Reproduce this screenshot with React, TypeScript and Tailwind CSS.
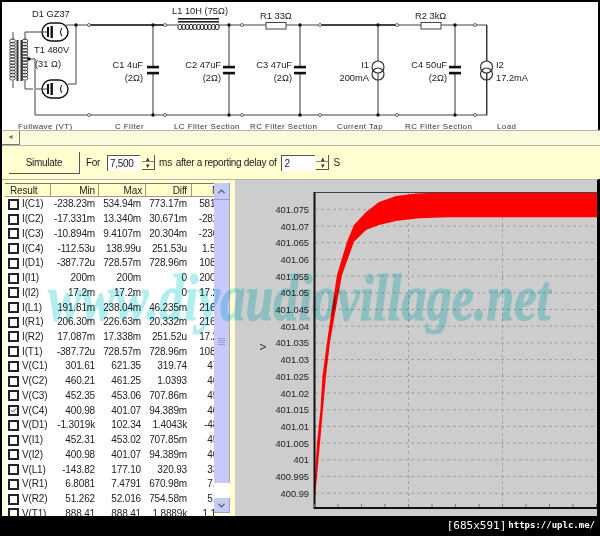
import React from 'react';
import { Check, ChevronDown, ChevronUp } from 'lucide-react';

const rows = [
  ['I(C1)', '-238.23m', '534.94m', '773.17m', '581.05m'],
  ['I(C2)', '-17.331m', '13.340m', '30.671m', '-282.05u'],
  ['I(C3)', '-10.894m', '9.4107m', '20.304m', '-230.51u'],
  ['I(C4)', '-112.53u', '138.99u', '251.53u', '1.5067u'],
  ['I(D1)', '-387.72u', '728.57m', '728.96m', '108.33m'],
  ['I(I1)', '200m', '200m', '0', '200.00m'],
  ['I(I2)', '17.2m', '17.2m', '0', '17.200m'],
  ['I(L1)', '191.81m', '238.04m', '46.235m', '216.51m'],
  ['I(R1)', '206.30m', '226.63m', '20.332m', '216.51m'],
  ['I(R2)', '17.087m', '17.338m', '251.52u', '17.200m'],
  ['I(T1)', '-387.72u', '728.57m', '728.96m', '108.33m'],
  ['V(C1)', '301.61', '621.35', '319.74', '471.05'],
  ['V(C2)', '460.21', '461.25', '1.0393', '460.73'],
  ['V(C3)', '452.35', '453.06', '707.86m', '452.70'],
  ['V(C4)', '400.98', '401.07', '94.389m', '401.05'],
  ['V(D1)', '-1.3019k', '102.34', '1.4043k', '-48.219'],
  ['V(I1)', '452.31', '453.02', '707.85m', '452.66'],
  ['V(I2)', '400.98', '401.07', '94.389m', '401.05'],
  ['V(L1)', '-143.82', '177.10', '320.93', '33.001'],
  ['V(R1)', '6.8081', '7.4791', '670.98m', '7.1445'],
  ['V(R2)', '51.262', '52.016', '754.58m', '51.639'],
  ['V(T1)', '888.41', '888.41', '1.8889k', '1.1043k'],
];

const yLabels = [
  '401.075', '401.07', '401.065', '401.06', '401.055', '401.05', '401.045', '401.04', '401.035',
  '401.03', '401.025', '401.02', '401.015', '401.01', '401.005', '401', '400.995', '400.99',
];

const wire = 'stroke-[#444] fill-none';

function Node({ x, y, open }: { x: number; y: number; open?: boolean }) {
  return open ? (
    <circle cx={x} cy={y} r="1.5" fill="#fff" stroke="#444" strokeWidth="0.8" />
  ) : (
    <circle cx={x} cy={y} r="1.7" fill="#111" />
  );
}

function Cap({ x }: { x: number }) {
  return (
    <g>
      <line x1={x} y1="25" x2={x} y2="67" stroke="#333" />
      <line x1={x} y1="73" x2={x} y2="115" stroke="#333" />
      <rect x={x - 6} y="65.8" width="12" height="2.6" fill="#111" />
      <rect x={x - 6} y="71.8" width="12" height="2.6" fill="#111" />
    </g>
  );
}

function Source({ x }: { x: number }) {
  return (
    <g>
      <line x1={x} y1="25" x2={x} y2="115" stroke="#333" />
      <circle cx={x} cy="67" r="6" fill="#fff" stroke="#333" strokeWidth="1.2" />
      <circle cx={x} cy="74" r="6" fill="none" stroke="#333" strokeWidth="1.2" />
    </g>
  );
}

function Tube({ y }: { y: number }) {
  return (
    <g>
      <rect x="42" y={y - 9} width="26" height="18" rx="9" fill="#fff" stroke="#111" strokeWidth="1.4" />
      <line x1="41" y1={y} x2="47" y2={y} stroke="#444" />
      <rect x="47" y={y - 5} width="2" height="10" fill="#111" />
      <rect x="50.5" y={y - 6} width="2.4" height="12" fill="#111" />
      <path d={`M62 ${y - 4} Q59 ${y} 62 ${y + 4}`} fill="none" stroke="#222" strokeWidth="1.1" />
    </g>
  );
}

function Coil({ x, y, n, dir }: { x: number; y: number; n: number; dir: 'h' | 'v' }) {
  const loops = [];
  for (let i = 0; i < n; i++) {
    loops.push(
      dir === 'h' ? (
        <ellipse key={i} cx={x + i * 3.7} cy={y} rx="2.2" ry="2.6" fill="none" stroke="#222" strokeWidth="1" />
      ) : (
        <ellipse key={i} cx={x} cy={y + i * 3.1} rx="2.8" ry="2" fill="none" stroke="#333" strokeWidth="0.9" />
      ),
    );
  }
  return <g>{loops}</g>;
}

function Schematic() {
  return (
    <svg viewBox="2 2 596 128" className="h-[128px] w-[596px] shrink-0 bg-white font-['Liberation_Sans',Arial,sans-serif] text-[9.3px]">
      {/* main rails */}
      <g className={wire}>
        <path d="M66 25H165M165 25H178M218 25H266M286 25H421M441 25H487V115H35V59H27" />
        <path d="M68 84H76V25" />
        <path d="M25 40V32H41M25 81V89H33M36 89H41M13 40V32M13 81V88" />
      </g>
      <line x1="89" y1="25" x2="165" y2="25" stroke="#222" strokeWidth="1.3" />
      <line x1="320" y1="25" x2="397" y2="25" stroke="#222" strokeWidth="1.3" />

      {/* transformer */}
      <Coil x={12.5} y={41} n={13} dir="v" />
      <Coil x={25} y={41} n={13} dir="v" />
      <rect x="16.5" y="40" width="2" height="41" fill="#333" />
      <rect x="20.5" y="40" width="2" height="41" fill="#333" />
      <Tube y={32} />
      <Tube y={89} />

      {/* L1 */}
      <rect x="178" y="18" width="41" height="1.6" fill="#222" />
      <rect x="178" y="21" width="41" height="1.6" fill="#222" />
      <Coil x={180} y={27} n={11} dir="h" />

      {/* R1, R2 */}
      <rect x="266" y="22.5" width="20" height="6.5" fill="#fff" stroke="#444" />
      <rect x="421" y="22.5" width="20" height="6.5" fill="#fff" stroke="#444" />

      <Cap x={153} />
      <Cap x={229} />
      <Cap x={300} />
      <Cap x={455} />
      <Source x={378} />
      <Source x={486.5} />

      {[76, 153, 229, 300, 378, 455].map((x) => (
        <Node key={x} x={x} y={25} />
      ))}
      {[153, 229, 300, 378, 455].map((x) => (
        <Node key={x} x={x} y={115} />
      ))}
      <Node x={29} y={59} />
      {[89, 165, 242, 320, 397, 475].map((x) => (
        <g key={x}>
          <Node x={x} y={25} open />
          <Node x={x} y={115} open />
        </g>
      ))}

      <g fill="#222">
        <text x="32" y="17">D1 GZ37</text>
        <text x="34" y="53">T1 480V</text>
        <text x="35" y="67">(31 Ω)</text>
        <text x="172" y="14">L1 10H (75Ω)</text>
        <text x="260" y="19">R1 33Ω</text>
        <text x="415" y="19">R2 3kΩ</text>
        <g textAnchor="end">
          <text x="143" y="68">C1 4uF</text>
          <text x="143" y="81">(2Ω)</text>
          <text x="221" y="68">C2 47uF</text>
          <text x="221" y="81">(2Ω)</text>
          <text x="292" y="68">C3 47uF</text>
          <text x="292" y="81">(2Ω)</text>
          <text x="369" y="68">I1</text>
          <text x="369" y="81">200mA</text>
          <text x="447" y="68">C4 50uF</text>
          <text x="447" y="81">(2Ω)</text>
        </g>
        <text x="496" y="68">I2</text>
        <text x="496" y="81">17.2mA</text>
      </g>
      <g fill="#333" className="text-[8px] tracking-[0.4px]">
        <text x="18" y="129">Fullwave (VT)</text>
        <text x="115" y="129">C Filter</text>
        <text x="174" y="129">LC Filter Section</text>
        <text x="250" y="129">RC Filter Section</text>
        <text x="337" y="129">Current Tap</text>
        <text x="405" y="129">RC Filter Section</text>
        <text x="497" y="129">Load</text>
      </g>
    </svg>
  );
}

function Spinner() {
  return (
    <div className="flex h-[15px] w-[13px] flex-col border-r border-b border-[#555] text-[#333]">
      <div className="flex h-[7px] items-center justify-center border-b border-[#888] text-[7px] leading-none">▴</div>
      <div className="flex h-[7px] items-center justify-center text-[7px] leading-none">▾</div>
    </div>
  );
}

function Toolbar() {
  return (
    <>
      <div className="h-[16px] shrink-0 border-t border-b border-[#b5b5a5] bg-[#fbfbdc]">
        <div className="flex h-[14px] w-[18px] items-center justify-center border-r border-b border-[#777] text-[7px] text-[#777]">◄</div>
      </div>
      <div className="flex h-[33px] shrink-0 items-center bg-[#ffffd2] text-[10px] tracking-[-0.3px] text-[#222]">
        <div className="ml-[7px] flex h-[22px] w-[71px] items-center justify-center border-r border-b border-[#555]">Simulate</div>
        <span className="ml-[6px]">For</span>
        <div className="ml-[7px] flex h-[16px] w-[33px] items-center border-t border-l border-[#555] bg-white pl-[2px]">7,500</div>
        <div className="ml-[2px]"><Spinner /></div>
        <span className="ml-[4px]">ms</span>
        <span className="ml-[4px]">after a reporting delay of</span>
        <div className="ml-[5px] flex h-[16px] w-[34px] items-center border-t border-l border-[#555] bg-white pl-[2px]">2</div>
        <div className="ml-[1px]"><Spinner /></div>
        <span className="ml-[4px]">S</span>
      </div>
    </>
  );
}

function ResultsTable() {
  return (
    <div className="flex h-full shrink-0 bg-[#ffffd2] pt-[3px] pr-[5px] pl-[3px]">
      <div className="h-[333px] w-[209px] overflow-hidden border-t border-[#777] bg-white text-[10px] tracking-[-0.15px] text-[#222]">
        <div className="flex h-[13px] bg-[#ffffc8] leading-[13px]">
          <div className="w-[46px] shrink-0 border-r border-b border-[#999] pl-[5px]">Result</div>
          <div className="w-[48px] shrink-0 border-r border-b border-[#999] pr-[3px] text-right">Min</div>
          <div className="w-[47px] shrink-0 border-r border-b border-[#999] pr-[3px] text-right">Max</div>
          <div className="w-[46px] shrink-0 border-r border-b border-[#999] pr-[4px] text-right">Diff</div>
          <div className="grow border-b border-[#999] pl-[20px]">Mean</div>
        </div>
        {rows.map(([name, min, max, diff, mean]) => (
          <div key={name} className="grid h-[14.74px] w-[232px] grid-cols-[45px_45px_46px_46px_50px] items-center leading-none">
            <div className="flex items-center">
              <div className="ml-[3px] flex h-[11px] w-[11px] shrink-0 items-center justify-center border-2 border-[#222] bg-white">
                {name === 'V(C4)' && <Check size={9} strokeWidth={3} className="text-[#111]" />}
              </div>
              <span className="ml-[3px]">{name}</span>
            </div>
            <div className="text-right">{min}</div>
            <div className="text-right">{max}</div>
            <div className="text-right">{diff}</div>
            <div className="text-right">{mean}</div>
          </div>
        ))}
      </div>
      <div className="flex h-[330px] w-[16px] flex-col bg-[#c8c8fa]">
        <div className="flex h-[17px] items-center justify-center border-r border-b border-[#9a9ad8] bg-[#c4ccf4] text-[#556]">
          <ChevronUp size={11} strokeWidth={3} />
        </div>
        <div className="flex grow flex-col items-center justify-center gap-[1px] border-r border-[#aaa]">
          <div className="h-px w-[7px] bg-[#9a9ad8]" />
          <div className="h-px w-[7px] bg-[#9a9ad8]" />
          <div className="h-px w-[7px] bg-[#9a9ad8]" />
          <div className="h-px w-[7px] bg-[#9a9ad8]" />
        </div>
        <div className="h-[15px] bg-white" />
        <div className="flex h-[15px] items-center justify-center border-r border-b border-[#9a9ad8] bg-[#c4ccf4] text-[#556]">
          <ChevronDown size={11} strokeWidth={3} />
        </div>
      </div>
    </div>
  );
}

function Chart() {
  return (
    <svg viewBox="236 180 362 336" className="h-[336px] w-[362px] bg-[#cdcdcd] font-['Liberation_Sans',Arial,sans-serif] text-[9.3px]">
      {yLabels.map((label, i) => {
        const y = 209.3 + i * 16.7;
        return (
          <g key={label}>
            <line x1="316" y1={y} x2="598" y2={y} stroke="#a0a0a0" strokeDasharray="3 3" />
            <text x="310" y={y + 3.5} textAnchor="end" fill="#222">{label}</text>
          </g>
        );
      })}
      <line x1="409.5" y1="193" x2="409.5" y2="508" stroke="#a0a0a0" strokeDasharray="3 3" />
      <line x1="503.5" y1="193" x2="503.5" y2="508" stroke="#a0a0a0" strokeDasharray="3 3" />
      <polygon
        fill="#ff0000"
        points="315.5,497 316,476 318,443 321.5,409 323.5,376 328,342 333,308 338,275 348,241.7 355,225 367,212 380,202 397,196 417,193.5 430,193 598,193 598,217.3 450,217.3 420,218.3 397,221 380,225 367,230 355,241.7 343,275 337,308 331,342 327,376 324,409 321,443 318,476 316,498"
      />
      <line x1="316" y1="192.5" x2="598" y2="192.5" stroke="#444" />
      <line x1="315.5" y1="192" x2="315.5" y2="509" stroke="#111" strokeWidth="2" />
      <line x1="315" y1="508" x2="598" y2="508" stroke="#111" strokeWidth="2" />
      {Array.from({ length: 13 }, (_, i) => (
        <line key={i} x1={315.5 + i * 23.5} y1="504" x2={315.5 + i * 23.5} y2="507" stroke="#777" />
      ))}
      <text x="270" y="350" textAnchor="middle" transform="rotate(-90 267 350)" fill="#222">V</text>
    </svg>
  );
}

export default function App() {
  return (
    <div className="relative h-[536px] w-[600px] overflow-hidden bg-black font-['Liberation_Sans',Arial,sans-serif] blur-[0.3px]">
      <div className="flex h-[516px] flex-col pt-[2px] pl-[2px]">
        <Schematic />
        <Toolbar />
        <div className="flex h-[337px] w-[596px] overflow-hidden border-t border-[#b5b5a5]">
          <ResultsTable />
          <Chart />
        </div>
      </div>
      <div className="flex h-[20px] items-center justify-end gap-[2px] pr-[5px] text-white">
        <span className="font-['DejaVu_Sans_Mono',monospace] text-[11px]">[685x591]</span>
        <span className="font-['DejaVu_Sans_Mono',monospace] text-[9px] font-bold">https://uplc.me/</span>
      </div>
      {/* watermark */}
      <div className="pointer-events-none absolute top-[265px] left-[48px] origin-left scale-x-[0.76] font-['Liberation_Serif',serif] text-[66px] leading-none font-bold whitespace-nowrap text-[#b0eef0] italic mix-blend-multiply [-webkit-text-stroke:1px_#b0eef0]">
        www.diyaudiovillage.net
      </div>
    </div>
  );
}
